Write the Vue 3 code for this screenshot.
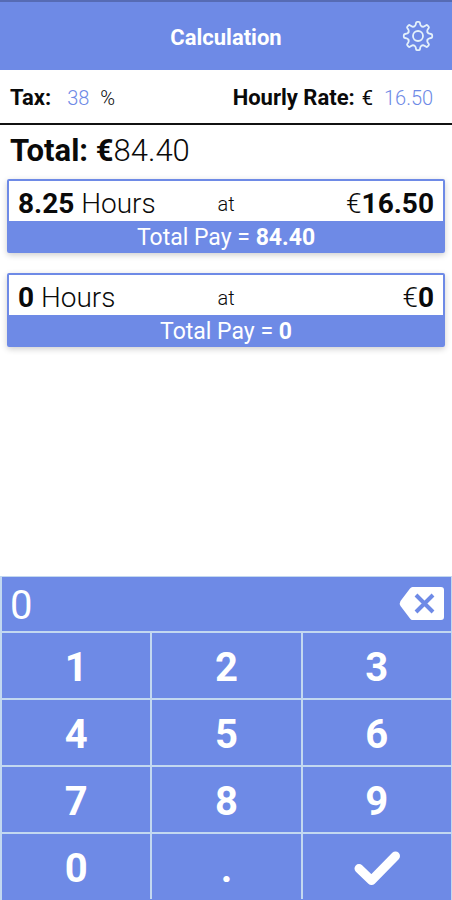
<template>
  <div class="calculation">
    <header class="header">
      <h1>Calculation</h1>
      <button type="button" class="settings-btn" aria-label="Settings">
        <svg viewBox="-16 -16 32 32" width="32" height="32">
          <path
            v-for="n in 8"
            :key="n"
            :transform="`rotate(${n * 45})`"
            d="M-3.9-9.5C-2.8-9.9-2.5-10.4-2.3-11.4L-2-13Q-1.8-14.2-.8-14.2H.8Q1.8-14.2 2-13L2.3-11.4C2.5-10.4 2.8-9.9 3.9-9.5"
          />
          <circle r="5" />
        </svg>
      </button>
    </header>

    <div class="rates">
      <div class="field">
        <label for="tax">Tax:</label>
        <input id="tax" v-model="tax" class="tax-input" inputmode="decimal" />
        <span class="percent">%</span>
      </div>
      <div class="field rate-field">
        <label for="rate">Hourly Rate:</label>
        <span>€</span>
        <input id="rate" v-model="rate" class="rate-input" inputmode="decimal" />
      </div>
    </div>

    <main>
      <p class="total"><b>Total: €</b>{{ total }}</p>

      <section v-for="(shift, i) in shifts" :key="i" class="card">
        <div class="card-top">
          <span><b>{{ shift.hours }}</b> Hours</span>
          <span class="at">at</span>
          <span class="amount">€<b>{{ shift.rate }}</b></span>
        </div>
        <p class="pay">Total Pay = <b>{{ payFor(shift) }}</b></p>
      </section>
    </main>

    <div class="keypad">
      <div class="display">
        <output>{{ entry }}</output>
        <button type="button" class="delete-btn" aria-label="Delete" @click="remove">
          <svg viewBox="0 0 46 36" width="46" height="36">
            <path
              class="tag"
              d="M13.500 1H42Q45 1 45 4V31Q45 34 42 34H13.500Q12 34 11 32.500L1.500 20Q0 17.500 1.500 15L11 2.500Q12 1 13.500 1Z"
            />
            <path class="cross" d="M17 9L34 26M34 9L17 26" />
          </svg>
        </button>
      </div>
      <div class="keys">
        <button v-for="key in keys" :key="key" type="button" @click="press(key)">
          {{ key }}
        </button>
        <button type="button" aria-label="Confirm" @click="confirm">
          <svg viewBox="0 0 48 38" width="48" height="38">
            <path class="check" d="M6 18.500L18.500 30.500L42.500 6" />
          </svg>
        </button>
      </div>
    </div>
  </div>
</template>

<script setup>
import { ref, computed } from "vue";

const keys = ["1", "2", "3", "4", "5", "6", "7", "8", "9", "0", "."];

const tax = ref("38");
const rate = ref("16.50");
const entry = ref("0");
const shifts = ref([
  { hours: "8.25", rate: "16.50" },
  { hours: "0", rate: "0" },
]);

const netPay = (shift) => shift.hours * shift.rate * (1 - tax.value / 100);

const payFor = (shift) => {
  const pay = netPay(shift);
  return pay ? pay.toFixed(2) : "0";
};

const total = computed(() =>
  shifts.value.reduce((sum, shift) => sum + netPay(shift), 0).toFixed(2)
);

const press = (key) => {
  if (key === "." && entry.value.includes(".")) return;
  entry.value = entry.value === "0" && key !== "." ? key : entry.value + key;
};

const remove = () => {
  entry.value = entry.value.slice(0, -1) || "0";
};

const confirm = () => {
  const last = shifts.value[shifts.value.length - 1];
  last.hours = entry.value;
  last.rate = rate.value;
  shifts.value.push({ hours: "0", rate: "0" });
  entry.value = "0";
};
</script>

<style>
body {
  margin: 0;
  background: #fff;
}
</style>

<style scoped>
.calculation {
  display: flex;
  flex-direction: column;
  min-height: 100vh;
  font-family: Roboto, "Liberation Sans", sans-serif;
  color: #0a0a0a;
}

button {
  padding: 0;
  border: none;
  background: #6e8ae6;
  color: #fff;
  font-family: inherit;
  cursor: pointer;
}

svg {
  display: block;
}

p {
  margin: 0;
}

b {
  font-weight: 700;
}

.header {
  display: grid;
  grid-template-columns: 1fr auto 1fr;
  align-items: center;
  height: 68px;
  padding: 0 18px;
  border-top: 2px solid #566bb4;
  background: #6e8ae6;
  color: #fff;
}

h1 {
  grid-column: 2;
  margin: 0;
  padding-top: 2px;
  font-size: 22px;
  font-weight: 700;
}

.settings-btn {
  justify-self: end;
}

.settings-btn svg {
  fill: none;
  stroke: #e4f1fa;
  stroke-width: 1.8;
  stroke-linecap: round;
}

.rates {
  display: flex;
  justify-content: space-between;
  align-items: center;
  height: 55px;
  padding: 2px 17px 0 10px;
  border-bottom: 2px solid #111;
  box-sizing: border-box;
}

.field {
  display: flex;
  align-items: center;
  font-size: 20px;
}

.field label {
  font-size: 22px;
  font-weight: 700;
}

.field input {
  padding: 0;
  border: none;
  outline: none;
  background: none;
  color: #6e8ae6;
  font-family: inherit;
  font-size: 20px;
  font-weight: 300;
}

.tax-input {
  width: 24px;
  margin: 0 9px 0 16px;
}

.rate-input {
  width: 51px;
  margin-left: 11px;
}

.rate-field label {
  margin-right: 7px;
}

.percent {
  font-weight: 300;
}

.total {
  padding: 2px 10px 0;
  font-size: 31px;
  font-weight: 300;
  line-height: 48px;
}

main {
  flex: 1;
}

.card {
  margin: 4px 7px 20px;
  border: 2px solid #6e8ae6;
  border-radius: 2px;
  box-shadow: 0 2px 6px rgba(0, 0, 0, 0.2);
}

.card + .card {
  margin-top: 0;
}

.card-top {
  display: grid;
  grid-template-columns: 1fr auto 1fr;
  align-items: center;
  height: 40px;
  padding: 5px 9px 0;
  box-sizing: border-box;
  background: #fff;
  font-size: 28px;
  font-weight: 300;
}

.at {
  font-size: 20px;
}

.amount {
  text-align: right;
}

.pay {
  padding-top: 4px;
  background: #6e8ae6;
  color: #fff;
  font-size: 23px;
  line-height: 26px;
  text-align: center;
}

.keypad {
  border: solid #c3d8f0;
  border-width: 1px 1px 0 2px;
  background: #6e8ae6;
  color: #fff;
}

.display {
  display: flex;
  justify-content: space-between;
  align-items: center;
  height: 54px;
  padding: 0 6px 0 8px;
  font-size: 40px;
}

.display output {
  padding-top: 2px;
}

.tag {
  fill: #fff;
}

.cross {
  fill: none;
  stroke: #6e8ae6;
  stroke-width: 4;
}

.keys {
  display: grid;
  grid-template-columns: repeat(3, 1fr);
  gap: 2px;
  padding-top: 2px;
  border-bottom: 1px solid #6e8ae6;
  background: #c3d8f0;
}

.keys button {
  display: flex;
  justify-content: center;
  align-items: center;
  height: 65px;
  padding-top: 4px;
  font-size: 40px;
  font-weight: 700;
}

.check {
  fill: none;
  stroke: #fff;
  stroke-width: 9;
  stroke-linecap: round;
  stroke-linejoin: round;
}
</style>
